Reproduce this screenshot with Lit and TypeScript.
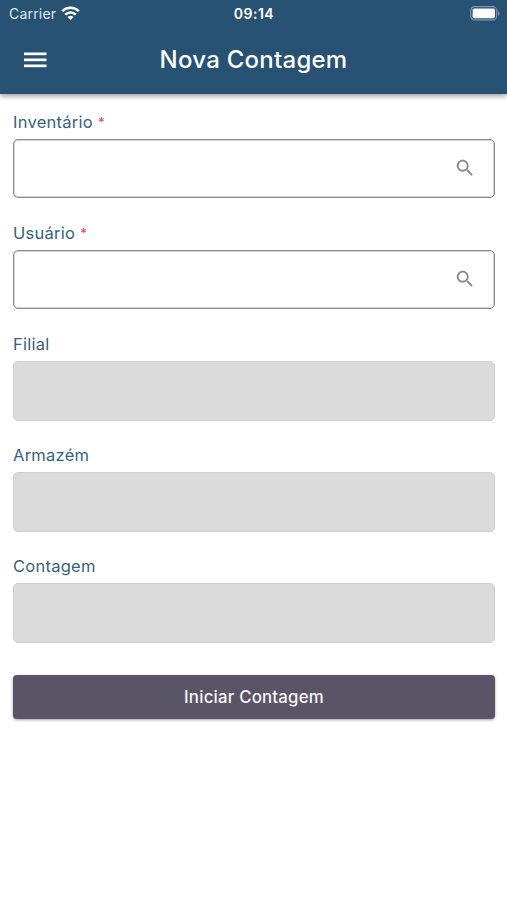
import { LitElement, html, css, svg, nothing } from "lit";
import { customElement, property } from "lit/decorators.js";

@customElement("status-bar")
class StatusBar extends LitElement {
  static styles = css`
    :host { display: grid; grid-template-columns: 1fr auto 1fr; align-items: center; height: 27px; padding: 0 7px 0 9px; color: #fff; }
    .carrier { display: flex; align-items: center; gap: 5px; font-size: 14px; letter-spacing: 0.2px; color: #dfe8ef; }
    .time { margin-right: 1px; font-size: 14px; font-weight: 600; letter-spacing: 0.5px; }
    .battery { justify-self: end; }
    svg { display: block; }
  `;
  render() {
    return html`
      <div class="carrier"><span>Carrier</span>
        <svg width="19" height="15" viewBox="0 0 19 15" fill="none" stroke="#fff" stroke-width="2.5">
          <path d="M1.1 5.2C5.8 0.6 13.2 0.6 17.9 5.2"></path>
          <path d="M4.2 8.6C7.1 5.7 11.9 5.7 14.8 8.6"></path>
          <path d="M6.5 11.1Q9.5 8.6 12.5 11.1L9.5 14.2Z" fill="#fff" stroke="none"></path>
        </svg>
      </div>
      <div class="time">09:14</div>
      <svg class="battery" width="30" height="15" viewBox="0 0 30 15">
        <rect x="0.7" y="0.7" width="26" height="13.2" rx="3.8" fill="none" stroke="#7d97ad" stroke-width="1.2"></rect>
        <rect x="2.6" y="2.4" width="22.4" height="9.8" rx="1.6" fill="#fff"></rect>
        <path d="M28 5v4.8c2.1-.9 2.1-3.9 0-4.8z" fill="#7d97ad"></path>
      </svg>`;
  }
}

@customElement("form-field")
class FormField extends LitElement {
  @property() label = "";
  @property({ type: Boolean }) required = false;
  @property({ type: Boolean }) disabled = false;
  static styles = css`
    :host { display: block; }
    .label { display: flex; height: 20px; line-height: 20px; margin-bottom: 7px; font-size: 16.5px; letter-spacing: 0.26px; color: #365f84; }
    .star { margin-left: 5px; color: #ec4a67; font-size: 13px; font-weight: 500; }
    .box { box-sizing: border-box; display: flex; align-items: center; justify-content: flex-end; height: 59px; padding: 0 18px 2px 0; border: 1px solid #8a8a8a; border-radius: 5px; background: #fff; box-shadow: inset 0 0 0 1px #d2d2d2; }
    .off { background: #dbdbdb; border: 1px solid #cecece; height: 60px; margin-bottom: -1px; box-shadow: none; }
  `;
  render() {
    return html`
      <div class="label">${this.label}${this.required ? html`<span class="star">*</span>` : nothing}</div>
      <div class="box ${this.disabled ? "off" : ""}">
        ${this.disabled ? nothing : html`<svg width="22" height="22" viewBox="0 0 24 24" fill="#8a8a8a">${svg`<path d="M15.5 14h-.79l-.28-.27C15.41 12.59 16 11.11 16 9.5 16 5.91 13.09 3 9.5 3S3 5.91 3 9.5 5.91 16 9.5 16c1.61 0 3.09-.59 4.23-1.57l.27.28v.79l5 4.99L20.49 19l-4.99-5zm-6 0C7.01 14 5 11.99 5 9.5S7.01 5 9.5 5 14 7.01 14 9.5 11.99 14 9.5 14z"></path>`}</svg>`}
      </div>`;
  }
}

@customElement("app-root")
class AppRoot extends LitElement {
  static styles = css`
    :host { display: block; height: 900px; overflow: hidden; background: #fff; font-family: Inter, "Liberation Sans", sans-serif; }
    header { height: 94px; background: #285274; box-shadow: 0 2px 5px rgba(0, 0, 0, 0.4); }
    .bar { display: grid; grid-template-columns: 1fr auto 1fr; align-items: center; height: 66px; padding: 0 24px; color: #fff; }
    h1 { margin: 0; font-size: 24px; line-height: 30px; font-weight: 500; letter-spacing: 0.25px; }
    .menu { display: block; }
    main { display: flex; flex-direction: column; gap: 25.1px; padding: 18px 12px 0 13px; }
    button { height: 44px; margin-top: 8px; padding: 0; border: 0; border-radius: 4px; background: #5a5566; color: #f7f5fb; font: 500 16.8px/44px Inter, "Liberation Sans", sans-serif; letter-spacing: 0.22px; box-shadow: 0 1px 3px rgba(50, 45, 70, 0.45); }
  `;
  render() {
    return html`
      <header>
        <status-bar></status-bar>
        <div class="bar">
          <svg class="menu" width="23" height="16" viewBox="0 0 23 16" fill="#fff">
            <rect y="0.5" width="22.5" height="2.7"></rect><rect y="6.5" width="22.5" height="2.7"></rect><rect y="12.5" width="22.5" height="2.7"></rect>
          </svg>
          <h1>Nova Contagem</h1>
        </div>
      </header>
      <main>
        <form-field label="Inventário" required></form-field>
        <form-field label="Usuário" required></form-field>
        <form-field label="Filial" disabled></form-field>
        <form-field label="Armazém" disabled></form-field>
        <form-field label="Contagem" disabled></form-field>
        <button>Iniciar Contagem</button>
      </main>`;
  }
}
